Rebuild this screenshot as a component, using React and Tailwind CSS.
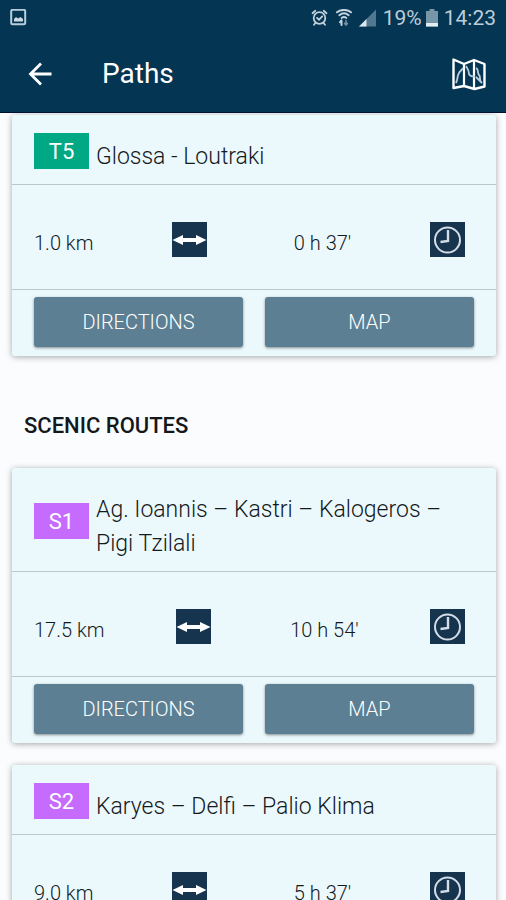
import clsx from 'clsx'

const currentRoutes = [
  { id: 'T5', name: 'Glossa - Loutraki', distance: '1.0 km', duration: "0 h 37'" },
]

const scenicRoutes = [
  { id: 'S1', name: 'Ag. Ioannis – Kastri – Kalogeros – Pigi Tzilali', distance: '17.5 km', duration: "10 h 54'" },
  { id: 'S2', name: 'Karyes – Delfi – Palio Klima', distance: '9.0 km', duration: "5 h 37'" },
]

function PictureIcon() {
  return (
    <svg viewBox="0 0 18 18" className="size-[18px]" fill="none" aria-hidden="true">
      <rect x="1.2" y="0.8" width="14" height="14.5" rx="1.5" stroke="#b9cedb" strokeWidth="2" />
      <path d="M4 12.500V10l2-2 2 1.500 2.500-1.500 2.500 2v2.500z" fill="#c9dae4" />
    </svg>
  )
}

function AlarmIcon() {
  return (
    <svg viewBox="0 0 18 18" className="size-[18px]" fill="none" stroke="#c3d2dc" strokeWidth="1.8" strokeLinecap="round" aria-hidden="true">
      <circle cx="8.500" cy="9" r="5.800" />
      <path d="M1.500 4.200 4.300 1.800M15.500 4.200 12.700 1.800M6 8.800l2 2 3.200-3.400M4.400 14 3 15.800M12.600 14l1.400 1.800" />
    </svg>
  )
}

function WifiIcon() {
  return (
    <svg viewBox="0 0 18 18" className="size-[18px]" fill="none" stroke="#c3d2dc" strokeLinecap="round" aria-hidden="true">
      <path d="M2 3.300c4-3.200 10-3.200 14 0" strokeWidth="2" />
      <path d="M4.300 6.200c2.800-2.300 6.600-2.300 9.400 0M6.600 9c1.500-1.200 3.300-1.200 4.800 0" strokeWidth="1.800" />
      <path d="M6.500 16v-4.500M5 13.200l1.500-1.700" strokeWidth="2" />
      <path d="M11 11.500V16M9.600 14.400 11 16l1.400-1.600" stroke="#6f8fa4" strokeWidth="1.600" />
    </svg>
  )
}

function SignalIcon() {
  return (
    <svg viewBox="0 0 18 18" className="size-[18px]" aria-hidden="true">
      <path d="M17 .5v17H0z" fill="#527890" />
      <path d="M7.500 10v7.500H0z" fill="#dbe6ed" />
    </svg>
  )
}

function BatteryIcon() {
  return (
    <svg viewBox="0 0 12 18" className="h-[18px] w-3" aria-hidden="true">
      <path d="M3.500 0h5v2H12v15.500H0V2h3.500z" fill="#7797a9" />
      <path d="M0 14h12v3.500H0z" fill="#e3edf2" />
    </svg>
  )
}

function BackIcon() {
  return (
    <svg viewBox="0 0 24 24" className="size-6" fill="none" stroke="white" strokeWidth="2.800" aria-hidden="true">
      <path d="M23.500 12H2.500M13 1.500 2.500 12 13 22.500" />
    </svg>
  )
}

function FoldedMapIcon() {
  return (
    <svg viewBox="0 0 34 34" className="size-[34px]" fill="none" stroke="white" strokeLinejoin="round" aria-hidden="true">
      <path d="M1.500 2.500 12 7l10-4 10.500 4v22.500l-10 2.500-10.500-3-10.500 2z" strokeWidth="2.400" />
      <path d="M12 7v22M22 3v29" strokeWidth="2.200" />
      <path d="M4 26c2-4 1-7 3-10 1-2 3-3 4-5M14 9c2 3 3 5 3 8 1 3 4 2 6 3M24 11c3 1 1 5 3 7 2 2 0 4 2 7M24 20l6 6" stroke="#b9cedb" strokeWidth="1.800" />
    </svg>
  )
}

function DistanceIcon() {
  return (
    <svg viewBox="0 0 35 35" className="size-[35px] shrink-0 bg-[#17344e]" aria-hidden="true">
      <path d="M.5 18 11 13v3h13v-3l10.500 5L24 23v-3H11v3z" fill="white" />
    </svg>
  )
}

function ClockIcon() {
  return (
    <svg viewBox="0 0 35 35" className="size-[35px] shrink-0 bg-[#17344e]" fill="none" stroke="#d3dde8" aria-hidden="true">
      <circle cx="17.500" cy="18" r="12.500" strokeWidth="2" />
      <path d="M18 8v11l-7.500 1" strokeWidth="2.400" />
    </svg>
  )
}

function StatusBar() {
  return (
    <div className="flex h-9 items-center justify-between px-[10px] text-[21px] leading-6 text-[#bccdd8]">
      <PictureIcon />
      <div className="flex items-center gap-[6px]">
        <AlarmIcon />
        <WifiIcon />
        <SignalIcon />
        <div className="flex items-center gap-1">
          <span>19%</span>
          <BatteryIcon />
        </div>
        <span>14:23</span>
      </div>
    </div>
  )
}

function RouteCard({ route }) {
  return (
    <article className="rounded-[3px] bg-[#ebf9fd] text-[#151a1c] shadow-[0_1px_6px_rgba(0,0,0,0.35)]">
      <div className="flex items-center gap-[7px] border-b border-[#b9c9cb] px-[22px] pt-[13px] pb-[10px]">
        <span
          className={clsx(
            'flex h-9 w-[55px] shrink-0 items-center justify-center text-[22px] text-white',
            route.id.startsWith('T') ? 'bg-[#00a884]' : 'bg-[#c56cff]'
          )}
        >
          {route.id}
        </span>
        <h3 className="pt-3 text-[23px] leading-[34px] font-light">{route.name}</h3>
      </div>

      <div className="flex h-[105px] items-center justify-between border-b border-[#b9c9cb] pt-1 pr-[31px] pl-[22px] text-[20px] font-light">
        <span className="pt-2">{route.distance}</span>
        <DistanceIcon />
        <span className="pt-2 pl-2">{route.duration}</span>
        <ClockIcon />
      </div>

      <div className="grid grid-cols-2 gap-[22px] px-[22px] pt-[7px] pb-[9px] text-[20px] font-light text-white">
        <button type="button" className="h-[50px] rounded-[3px] bg-[#5c7f93] shadow-[0_1px_3px_rgba(0,0,0,0.45)]">
          DIRECTIONS
        </button>
        <button type="button" className="h-[50px] rounded-[3px] bg-[#5c7f93] shadow-[0_1px_3px_rgba(0,0,0,0.45)]">
          MAP
        </button>
      </div>
    </article>
  )
}

export default function App() {
  return (
    <div className="flex h-screen flex-col bg-[#fbfcfe] font-[Roboto,sans-serif]">
      <header className="shrink-0 border-b border-[#02102f] bg-[#043553]">
        <StatusBar />
        <div className="flex h-[76px] items-center pr-5 pl-7 text-white">
          <button type="button" aria-label="Back">
            <BackIcon />
          </button>
          <h1 className="ml-[50px] flex-1 text-[28px]">Paths</h1>
          <button type="button" aria-label="Show map">
            <FoldedMapIcon />
          </button>
        </div>
      </header>

      <main className="min-h-0 flex-1 overflow-y-auto pt-[2px] pr-[10px] pb-5 pl-3 [scrollbar-width:none]">
        {currentRoutes.map((route) => (
          <RouteCard key={route.id} route={route} />
        ))}

        <h2 className="pt-[53px] pb-[25px] pl-3 text-[22px] leading-[34px] font-medium text-[#15181a]">SCENIC ROUTES</h2>

        <div className="grid gap-[22px]">
          {scenicRoutes.map((route) => (
            <RouteCard key={route.id} route={route} />
          ))}
        </div>
      </main>
    </div>
  )
}
